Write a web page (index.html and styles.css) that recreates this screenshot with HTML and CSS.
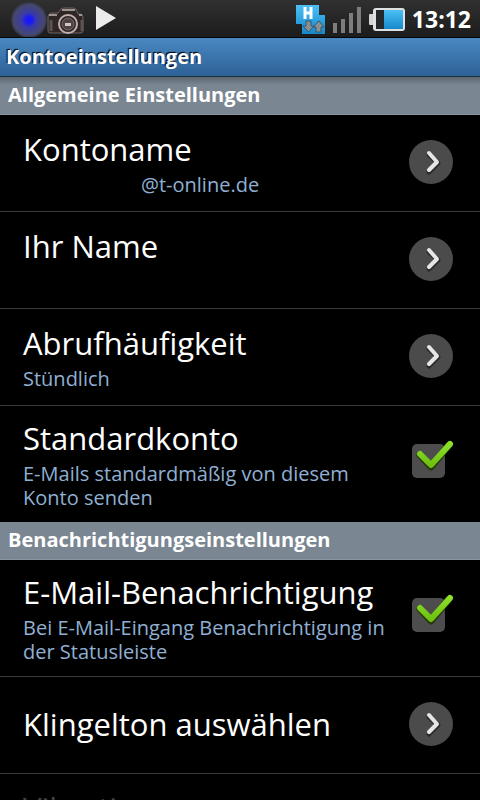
FILE: index.html
```html
<!DOCTYPE html>
<html lang="de">
<head>
    <meta charset="UTF-8">
    <meta name="viewport" content="width=device-width, initial-scale=1.0">
    <title>Kontoeinstellungen</title>
    <link rel="stylesheet" href="styles.css">
</head>
<body>
    <svg class="defs" aria-hidden="true">
        <defs>
            <linearGradient id="green" x1="0" y1="0" x2="0" y2="1">
                <stop offset="0" stop-color="#8ce02a"/>
                <stop offset="1" stop-color="#6fc010"/>
            </linearGradient>
            <linearGradient id="blue" x1="0" y1="0" x2="0" y2="1">
                <stop offset="0" stop-color="#4cc0f4"/>
                <stop offset="1" stop-color="#1488cc"/>
            </linearGradient>
            <radialGradient id="glow">
                <stop offset="0" stop-color="#1414ff"/>
                <stop offset="0.2" stop-color="#1c1cf0"/>
                <stop offset="0.4" stop-color="#3a3aa8"/>
                <stop offset="0.85" stop-color="#46486c"/>
                <stop offset="1" stop-color="#30323e"/>
            </radialGradient>
        </defs>
        <symbol id="arrow" viewBox="0 0 44 44">
            <circle cx="22" cy="22" r="22" fill="#4b4b4b"/>
            <path d="M20 15 L29 23 L20 32" fill="none" stroke="#2c2c2c" stroke-width="5" stroke-linecap="round" stroke-linejoin="round"/>
            <path d="M20 13 L28 22 L20 30" fill="none" stroke="#e6e6e6" stroke-width="4" stroke-linecap="round" stroke-linejoin="round"/>
        </symbol>
        <symbol id="check" viewBox="0 0 42 34">
            <path d="M8 15 L19 27 L37 5" fill="none" stroke="#25380e" stroke-width="7" stroke-linecap="round" stroke-linejoin="round"/>
            <path d="M8 14 L19 25 L38 4" fill="none" stroke="url(#green)" stroke-width="6" stroke-linecap="round" stroke-linejoin="round"/>
        </symbol>
    </svg>

    <div class="statusbar">
        <div class="notifications">
            <svg width="74" height="37" viewBox="0 0 74 37">
                <!-- camera -->
                <path d="M37 17 q0 -3 3 -4 h7 l3 -4 q1 -1 4 -1 h7 q3 0 4 1 l2 5 h2 q3 0 3 3 v14 q0 2 -3 2 h-29 q-3 0 -3 -2z" fill="#2e2726" stroke="#6e6463"/>
                <path d="M51 10 h13 M38 15 h8 M68 15 h3" stroke="#9d9290" stroke-width="2"/>
                <path d="M40 20 v11 M71 20 v11" stroke="#5c5251" stroke-width="3"/>
                <circle cx="57" cy="24" r="9" fill="#2a2423" stroke="#c3afab" stroke-width="2"/>
                <circle cx="57" cy="24" r="6" fill="#4c4443" stroke="#7d6e6b"/>
                <path d="M54 23 h6 v3 h-6z" fill="#d0c6c4"/>
                <circle cx="18" cy="20" r="18" fill="url(#glow)"/>
            </svg>
            <svg width="21" height="37" viewBox="0 0 21 37">
                <path d="M0 6 L20 18 L0 30z" fill="#ececec"/>
            </svg>
        </div>
        <div class="system">
            <svg width="30" height="30" viewBox="0 0 30 30">
                <path d="M0 1 h23 v10 h6 v19 h-23 v-10 h-6z" fill="url(#blue)"/>
                <path d="M9 3 v12 M15 3 v12 M9 9 h6" stroke="#fff" stroke-width="3" fill="none"/>
                <path d="M10 17 h5 v5 h3 l-5.500 6 l-5.500 -6 h3z M20 28 h5 v-5 h3 l-5 -6 l-6 6 h3z" fill="#8b8f93" stroke="#33586e"/>
            </svg>
            <svg width="29" height="30" viewBox="0 0 29 30">
                <path d="M0 19 h4 v10 h-4z M8 15 h4 v14 h-4z M16 9 h4 v20 h-4z M24 3 h4 v26 h-4z" fill="#7d7d7d"/>
            </svg>
            <svg width="36" height="30" viewBox="0 0 36 30">
                <rect x="0" y="10" width="6" height="11" rx="1" fill="#d5d5d5"/>
                <rect x="4" y="4" width="32" height="23" rx="3" fill="#e0e0e0"/>
                <rect x="7" y="6" width="26" height="19" fill="#26292c"/>
                <rect x="15" y="6" width="19" height="19" fill="url(#blue)"/>
            </svg>
            <span class="clock">13:12</span>
        </div>
    </div>

    <h1 class="titlebar">Kontoeinstellungen</h1>

    <main class="settings">
        <h2 class="section">Allgemeine Einstellungen</h2>
        <button class="row" type="button">
            <span class="text">
                <span class="title">Kontoname</span>
                <span class="summary"><span class="hidden-name"></span>@t-online.de</span>
            </span>
            <svg class="arrow"><use href="#arrow"/></svg>
        </button>
        <button class="row" type="button">
            <span class="text">
                <span class="title">Ihr Name</span>
                <span class="summary"></span>
            </span>
            <svg class="arrow"><use href="#arrow"/></svg>
        </button>
        <button class="row" type="button">
            <span class="text">
                <span class="title">Abrufhäufigkeit</span>
                <span class="summary">Stündlich</span>
            </span>
            <svg class="arrow"><use href="#arrow"/></svg>
        </button>
        <label class="row last">
            <span class="text">
                <span class="title">Standardkonto</span>
                <span class="summary">E-Mails standardmäßig von diesem Konto senden</span>
            </span>
            <span class="checkbox">
                <input type="checkbox" checked>
                <svg class="check"><use href="#check"/></svg>
            </span>
        </label>

        <h2 class="section">Benachrichtigungseinstellungen</h2>
        <label class="row">
            <span class="text">
                <span class="title">E-Mail-Benachrichtigung</span>
                <span class="summary">Bei E-Mail-Eingang Benachrichtigung in der Statusleiste</span>
            </span>
            <span class="checkbox">
                <input type="checkbox" checked>
                <svg class="check"><use href="#check"/></svg>
            </span>
        </label>
        <button class="row" type="button">
            <span class="text">
                <span class="title">Klingelton auswählen</span>
            </span>
            <svg class="arrow"><use href="#arrow"/></svg>
        </button>
        <button class="row" type="button" disabled>
            <span class="text">
                <span class="title">Vibration</span>
                <span class="summary"></span>
            </span>
        </button>
    </main>
</body>
</html>
```
FILE: styles.css
```css
* {
    margin: 0;
    padding: 0;
    box-sizing: border-box;
}
body {
    display: flex;
    flex-direction: column;
    height: 100vh;
    background: #000;
    color: #fff;
    font-family: "Open Sans", "Noto Sans", sans-serif;
}
.defs {
    position: absolute;
    width: 0;
    height: 0;
}

/* status bar */
.statusbar {
    display: flex;
    flex: none;
    justify-content: space-between;
    align-items: center;
    height: 38px;
    padding: 0 9px 0 11px;
    background: linear-gradient(#303030, #1c1c1c);
    border-bottom: 1px solid #050505;
}
.notifications {
    display: flex;
    gap: 11px;
}
.system {
    display: flex;
    align-items: center;
    gap: 7px;
}
.clock {
    font-size: 23px;
    font-weight: bold;
    line-height: 30px;
}

.titlebar {
    flex: none;
    height: 39px;
    padding-left: 6px;
    background: linear-gradient(#4a88c2, #2c6196);
    border-bottom: 1px solid #1c3040;
    font-size: 20px;
    line-height: 37px;
    text-shadow: -1px -1px 1px #000;
}

/* list */
.settings {
    flex: 1;
    min-height: 0;
    overflow-y: auto;
    scrollbar-width: none;
}
.section {
    height: 38px;
    padding-left: 8px;
    background: #7a8691;
    border-bottom: 1px solid #8a969f;
    font-size: 20px;
    line-height: 36px;
}
.section:first-child {
    background: linear-gradient(#5c666f, #7a8691 8px);
}
.row {
    display: flex;
    align-items: center;
    justify-content: space-between;
    gap: 10px;
    width: 100%;
    min-height: 97px;
    padding: 10px 27px 12px 23px;
    background: #000;
    border: 0;
    border-bottom: 1px solid #3a3a3a;
    color: #fff;
    font-family: inherit;
    text-align: left;
    cursor: pointer;
}
.row.last {
    border-bottom: 0;
}
.row:disabled {
    color: #444;
}
.text {
    display: flex;
    flex: 1;
    flex-direction: column;
    gap: 2px;
}
.title {
    font-size: 31px;
    line-height: 44px;
    white-space: nowrap;
}
.summary {
    min-height: 24px;
    color: #8fb0d4;
    font-size: 20px;
    line-height: 24px;
}
.hidden-name {
    display: inline-block;
    width: 118px;
}
.arrow {
    flex: none;
    width: 44px;
    height: 44px;
}

.checkbox {
    position: relative;
    flex: none;
    width: 41px;
    height: 38px;
}
.checkbox input {
    display: block;
    width: 33px;
    height: 34px;
    appearance: none;
    background: #4d4d4d;
    border-radius: 5px;
}
.check {
    display: none;
    position: absolute;
    top: -4px;
    left: 0;
    width: 42px;
    height: 34px;
}
.checkbox input:checked + .check {
    display: block;
}
```
